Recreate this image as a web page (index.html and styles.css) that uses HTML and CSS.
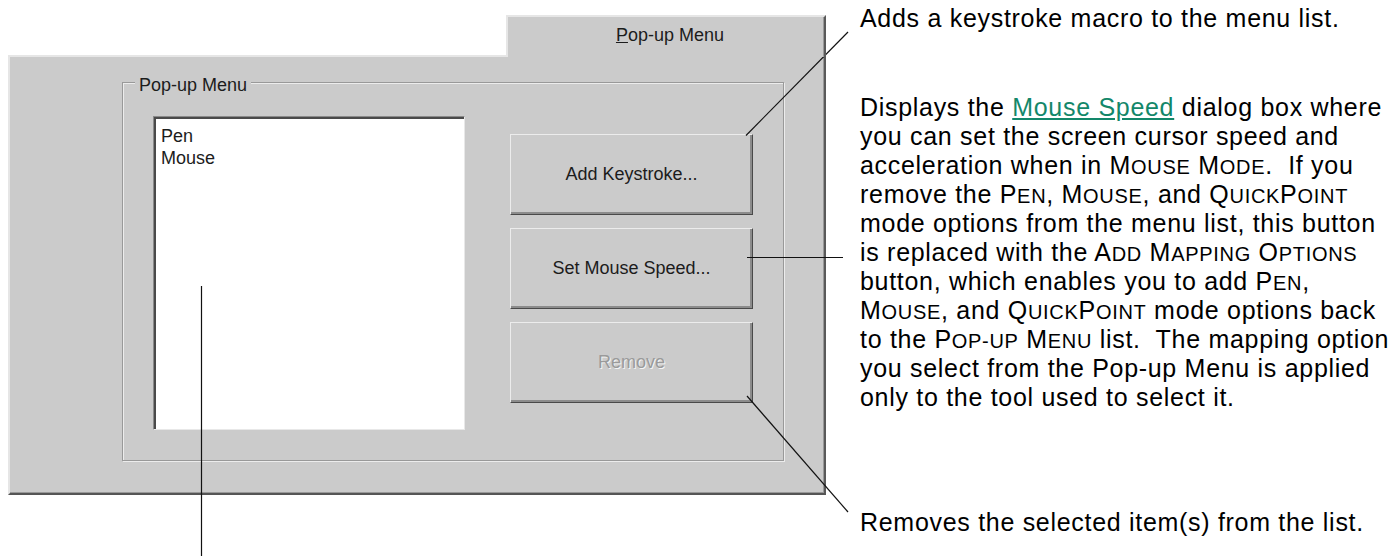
FILE: index.html
```html
<!DOCTYPE html>
<html lang="en">
<head>
  <meta charset="UTF-8" />
  <title>Pop-up Menu</title>
  <link rel="stylesheet" href="styles.css">
</head>
<body>

  <div class="page">

    <div class="dialog">
      <div class="tabs">
        <div class="tab"><u>P</u>op-up Menu</div>
      </div>

      <div class="panel">
        <div class="group">
          <span class="group-label">Pop-up Menu</span>

          <div class="listbox">
            <div class="item">Pen</div>
            <div class="item">Mouse</div>
          </div>

          <div class="buttons">
            <div class="btn">Add Keystroke...</div>
            <div class="btn">Set Mouse Speed...</div>
            <div class="btn disabled">Remove</div>
          </div>
        </div>
      </div>
    </div>

    <div class="notes">
      <p class="note first">Adds a keystroke macro to the menu list.</p>

      <p class="note second">
        Displays the <a href="#">Mouse Speed</a> dialog box where<br>
        you can set the screen cursor speed and<br>
        acceleration when in M<span class="sm">OUSE</span> M<span class="sm">ODE</span>.&nbsp; If you<br>
        remove the P<span class="sm">EN</span>, M<span class="sm">OUSE</span>, and Q<span class="sm">UICK</span>P<span class="sm">OINT</span><br>
        mode options from the menu list, this button<br>
        is replaced with the A<span class="sm">DD</span> M<span class="sm">APPING</span> O<span class="sm">PTIONS</span><br>
        button, which enables you to add P<span class="sm">EN</span>,<br>
        M<span class="sm">OUSE</span>, and Q<span class="sm">UICK</span>P<span class="sm">OINT</span> mode options back<br>
        to the P<span class="sm">OP-UP</span> M<span class="sm">ENU</span> list.&nbsp; The mapping option<br>
        you select from the Pop-up Menu is applied<br>
        only to the tool used to select it.
      </p>

      <p class="note third">Removes the selected item(s) from the list.</p>
    </div>

  </div>

  <!-- callout lines -->
  <svg class="callouts" width="1388" height="556" viewBox="0 0 1388 556">
    <line x1="746" y1="135.5" x2="848" y2="32" />
    <line x1="747" y1="257.5" x2="843" y2="257.5" />
    <line x1="747" y1="396" x2="848" y2="512" />
    <line x1="201.5" y1="286" x2="201.5" y2="556" />
  </svg>

</body>
</html>
```

FILE: styles.css
```css
body {
  margin: 0;
  background: white;
  color: black;
  font-family: "Liberation Sans", Arial, sans-serif;
  width: 1388px;
  height: 556px;
  overflow: hidden;
  position: relative;
}

.page {
  display: flex;
  align-items: flex-start;
}

/* ---- dialog ---- */

.dialog {
  margin-left: 8px;
  padding-top: 15px;
  width: 818px;
  flex-shrink: 0;
  font-size: 18px;
  color: #1c1c1c;
}

.tabs {
  display: flex;
  justify-content: flex-end;
}

.tab {
  width: 320px;
  height: 42px;
  box-sizing: border-box;
  background: #cbcbcb;
  border-top: 2px solid #e6e6e6;
  border-left: 2px solid #e6e6e6;
  border-right: 2px solid #5a5a5a;
  box-shadow: inset -1px 0 0 #9a9a9a;
  margin-bottom: -2px;
  position: relative;
  z-index: 1;
  display: flex;
  align-items: center;
  justify-content: center;
  padding-left: 8px;
  padding-bottom: 4px;
}

.panel {
  height: 440px;
  box-sizing: border-box;
  background: #cbcbcb;
  border-top: 2px solid #e6e6e6;
  border-left: 2px solid #e6e6e6;
  border-right: 2px solid #5a5a5a;
  border-bottom: 2px solid #555;
  box-shadow: inset -1px -1px 0 #999;
  padding-top: 25px;
  padding-left: 112px;
}

.group {
  position: relative;
  width: 662px;
  height: 379px;
  box-sizing: border-box;
  border: 1px solid #999;
  box-shadow: inset 1px 1px 0 #ececec, 1px 1px 0 #ececec;
  display: flex;
  align-items: flex-start;
  padding-top: 33px;
  padding-left: 30px;
  gap: 45px;
}

.group-label {
  position: absolute;
  top: -10px;
  left: 12px;
  padding: 0 4px;
  background: #cbcbcb;
  line-height: 24px;
}

.listbox {
  width: 312px;
  height: 314px;
  box-sizing: border-box;
  background: white;
  border-top: 1px solid #8a8a8a;
  border-left: 1px solid #8a8a8a;
  border-right: 1px solid #e8e8e8;
  border-bottom: 1px solid #e8e8e8;
  box-shadow: inset 2px 2px 0 #4a4a4a;
  padding: 8px 0 0 7px;
}

.item {
  line-height: 22px;
}

.buttons {
  display: flex;
  flex-direction: column;
  gap: 13px;
  margin-top: 18px;
}

.btn {
  width: 243px;
  height: 81px;
  box-sizing: border-box;
  border-top: 1px solid #ececec;
  border-left: 1px solid #ececec;
  border-right: 1px solid #4a4a4a;
  border-bottom: 1px solid #4a4a4a;
  box-shadow: inset -2px -2px 0 #8c8c8c;
  display: flex;
  align-items: center;
  justify-content: center;
}

.btn.disabled {
  color: #9a9a9a;
  text-shadow: 1px 1px 0 #f4f4f4;
}

/* ---- notes on the right ---- */

.notes {
  margin-left: 34px;
  padding-top: 4px;
  font-size: 25px;
  letter-spacing: 0.7px;
  line-height: 29px;
  white-space: nowrap;
}

.note {
  margin: 0;
}

.note.second {
  margin-top: 60px;
}

.note.third {
  margin-top: 96px;
}

.notes a {
  color: #13876a;
  text-decoration: underline;
}

.sm {
  font-size: 0.8em;
  line-height: 0;
}

.callouts {
  position: absolute;
  top: 0;
  left: 0;
  pointer-events: none;
}

.callouts line {
  stroke: #111;
  stroke-width: 1.2;
}
```
